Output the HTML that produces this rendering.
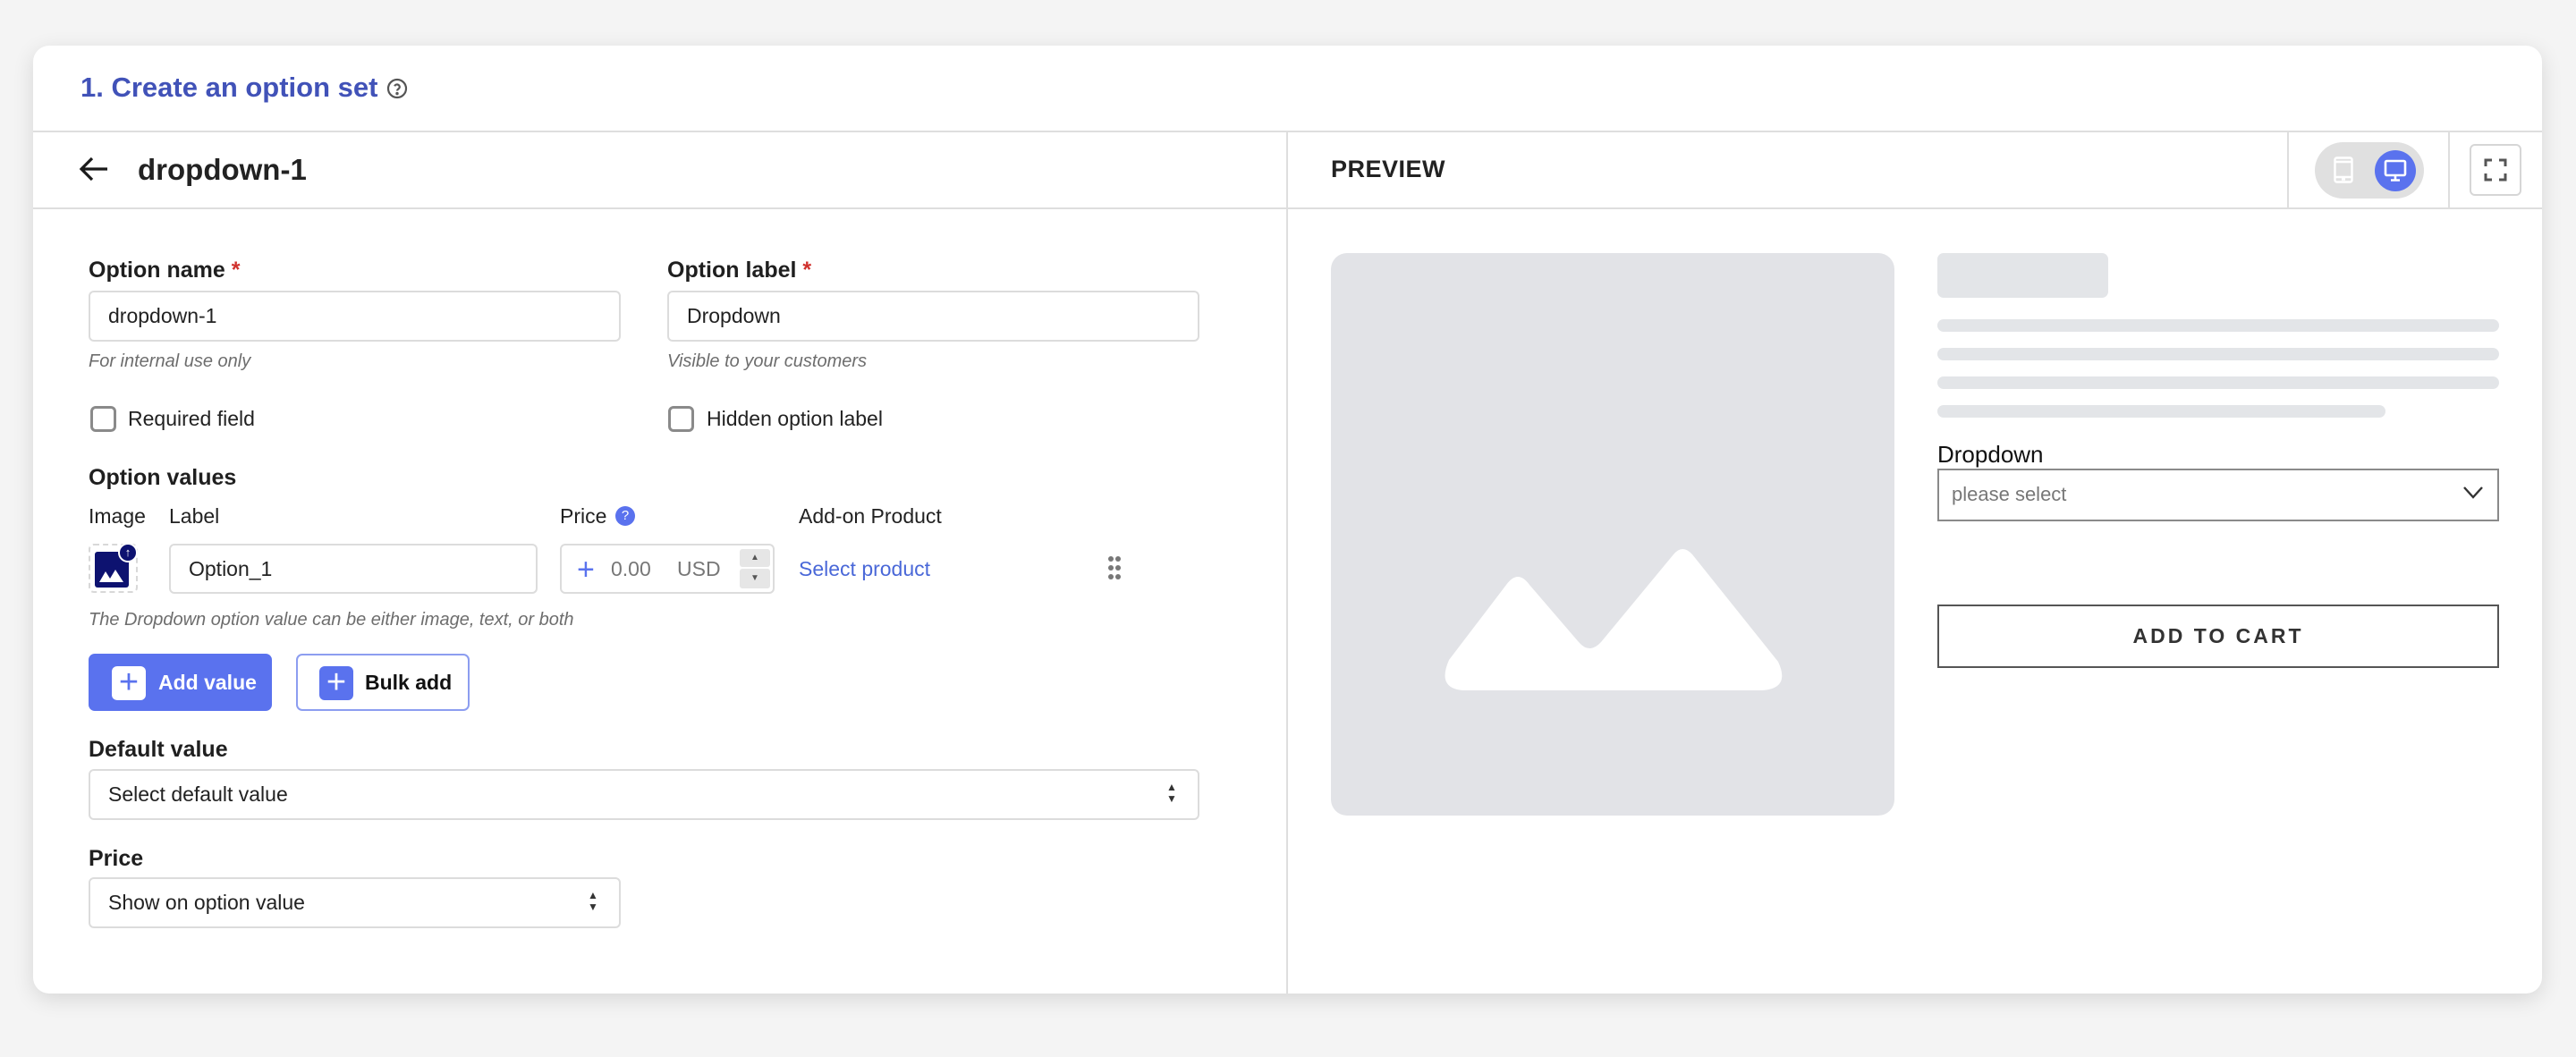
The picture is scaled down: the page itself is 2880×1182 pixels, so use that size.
<!DOCTYPE html>
<html><head><meta charset="utf-8"><style>
*{box-sizing:border-box;margin:0;padding:0}
body{width:2880px;height:1182px;background:#f4f4f4;font-family:"Liberation Sans",Arial,sans-serif;color:#1f1f1f;position:relative;overflow:hidden}
.a{position:absolute}
.card{left:37px;top:51px;width:2805px;height:1060px;background:#fff;border-radius:18px;box-shadow:0 6px 24px rgba(0,0,0,.12)}
.lbl{font-size:25px;font-weight:700;color:#1f1f1f}
.inp{border:2px solid #dcdcdc;border-radius:6px;background:#fff;font-size:23px;color:#222;padding-left:20px;display:flex;align-items:center}
.help{font-size:20px;font-style:italic;color:#6d6d6d}
.cb{width:29px;height:29px;border:3px solid #8a8a8a;border-radius:6px}
.t{font-size:23px;color:#222}
.sk{background:#e3e5e8;border-radius:7px}
</style></head><body>
<div class="a card"></div>
<div class="a" style="left:90px;top:80px;font-size:31px;font-weight:700;color:#4152b8">1. Create an option set</div>
<svg class="a" style="left:432px;top:87px" width="24" height="24" viewBox="0 0 24 24" fill="none" stroke="#555" stroke-width="2.2"><circle cx="12" cy="12" r="10"/><path d="M9.2 9.3a2.9 2.9 0 0 1 5.6 1c0 2-2.8 2.3-2.8 4.2"/><circle cx="12" cy="17.6" r=".6" fill="#555"/></svg>
<div class="a" style="left:37px;top:146px;width:2805px;height:2px;background:#dedede"></div>
<div class="a" style="left:37px;top:232px;width:2805px;height:2px;background:#dedede"></div>
<div class="a" style="left:1438px;top:146px;width:2px;height:965px;background:#dedede"></div>
<svg class="a" style="left:88px;top:175px" width="34" height="28" viewBox="0 0 34 28" fill="none" stroke="#1a1a1a" stroke-width="3.2"><path d="M32 14H3M15 2L3 14l12 12"/></svg>
<div class="a" style="left:154px;top:171px;font-size:33px;font-weight:600;color:#222">dropdown-1</div>
<div class="a" style="left:1488px;top:174px;font-size:27px;font-weight:600;color:#222;letter-spacing:.5px">PREVIEW</div>
<div class="a" style="left:2557px;top:147px;width:2px;height:86px;background:#dedede"></div>
<div class="a" style="left:2737px;top:147px;width:2px;height:86px;background:#dedede"></div>
<div class="a" style="left:2588px;top:159px;width:122px;height:63px;border-radius:32px;background:#e0e0e0"></div>
<svg class="a" style="left:2609px;top:175px" width="22" height="30" viewBox="0 0 22 30" fill="none" stroke="#fff" stroke-width="2.4"><rect x="1.5" y="1.5" width="19" height="27" rx="2"/><path d="M1.5 6h19M1.5 23h19M9 25.5h4"/></svg>
<div class="a" style="left:2655px;top:168px;width:46px;height:46px;border-radius:50%;background:#5a72ee"></div>
<svg class="a" style="left:2665px;top:178px" width="26" height="26" viewBox="0 0 26 26" fill="none" stroke="#fff" stroke-width="2.6"><rect x="2" y="2" width="22" height="16" rx="1.5"/><path d="M13 18v5M8 23.5h10"/></svg>
<div class="a" style="left:2761px;top:161px;width:58px;height:58px;border:2px solid #d6d6d6;border-radius:6px;background:#fff"></div>
<svg class="a" style="left:2777px;top:177px" width="26" height="26" viewBox="0 0 26 26" fill="none" stroke="#555" stroke-width="3"><path d="M2 9V2h7M17 2h7v7M24 17v7h-7M9 24H2v-7"/></svg>

<div class="a lbl" style="left:99px;top:288px">Option name <span style="color:#d0312d">*</span></div>
<div class="a inp" style="left:99px;top:325px;width:595px;height:57px">dropdown-1</div>
<div class="a help" style="left:99px;top:393px">For internal use only</div>
<div class="a lbl" style="left:746px;top:288px">Option label <span style="color:#d0312d">*</span></div>
<div class="a inp" style="left:746px;top:325px;width:595px;height:57px">Dropdown</div>
<div class="a help" style="left:746px;top:393px">Visible to your customers</div>
<div class="a cb" style="left:101px;top:454px"></div>
<div class="a t" style="left:143px;top:455px">Required field</div>
<div class="a cb" style="left:747px;top:454px"></div>
<div class="a t" style="left:790px;top:455px">Hidden option label</div>
<div class="a lbl" style="left:99px;top:520px">Option values</div>
<div class="a t" style="left:99px;top:564px">Image</div>
<div class="a t" style="left:189px;top:564px">Label</div>
<div class="a t" style="left:626px;top:564px">Price</div>
<div class="a" style="left:688px;top:566px;width:22px;height:22px;border-radius:50%;background:#5a72ee;color:#fff;font-size:15px;text-align:center;line-height:22px">?</div>
<div class="a t" style="left:893px;top:564px">Add-on Product</div>
<div class="a" style="left:99px;top:608px;width:55px;height:55px;border:2px dashed #d8d8d8;border-radius:6px"></div>
<div class="a" style="left:106px;top:617px;width:38px;height:40px;background:#0d1270;border-radius:3px"></div>
<svg class="a" style="left:110px;top:634px" width="30" height="18" viewBox="0 0 30 18" fill="#fff"><path d="M1 17l7-12 5 8 6-10 9 14z"/></svg>
<div class="a" style="left:132px;top:607px;width:22px;height:22px;border-radius:50%;background:#0d1270;border:2px solid #fff;color:#fff;font-size:13px;text-align:center;line-height:18px">↑</div>
<div class="a inp" style="left:189px;top:608px;width:412px;height:56px">Option_1</div>
<div class="a inp" style="left:626px;top:608px;width:240px;height:56px;padding-left:0"></div>
<div class="a" style="left:645px;top:618px;font-size:34px;color:#5a72ee">+</div>
<div class="a" style="left:683px;top:623px;font-size:23px;color:#777">0.00</div>
<div class="a" style="left:757px;top:623px;font-size:23px;color:#777">USD</div>
<div class="a" style="left:827px;top:614px;width:34px;height:20px;background:#e6e6e6;border-radius:3px;font-size:10px;text-align:center;line-height:20px;color:#555">▲</div>
<div class="a" style="left:827px;top:636px;width:34px;height:22px;background:#e6e6e6;border-radius:3px;font-size:10px;text-align:center;line-height:22px;color:#555">▼</div>
<div class="a" style="left:893px;top:623px;font-size:23px;color:#4a68d8">Select product</div>
<svg class="a" style="left:1238px;top:621px" width="16" height="28" viewBox="0 0 16 28" fill="#777"><circle cx="4" cy="4" r="3"/><circle cx="12" cy="4" r="3"/><circle cx="4" cy="14" r="3"/><circle cx="12" cy="14" r="3"/><circle cx="4" cy="24" r="3"/><circle cx="12" cy="24" r="3"/></svg>
<div class="a help" style="left:99px;top:682px">The Dropdown option value can be either image, text, or both</div>
<div class="a" style="left:99px;top:731px;width:205px;height:64px;background:#5a72ee;border-radius:7px"></div>
<div class="a" style="left:125px;top:745px;width:38px;height:38px;background:#fff;border-radius:6px;color:#5a72ee;font-size:38px;text-align:center;line-height:36px">+</div>
<div class="a" style="left:177px;top:750px;font-size:23px;font-weight:700;color:#fff">Add value</div>
<div class="a" style="left:331px;top:731px;width:194px;height:64px;border:2px solid #8c9df0;border-radius:7px"></div>
<div class="a" style="left:357px;top:745px;width:38px;height:38px;background:#5a72ee;border-radius:6px;color:#fff;font-size:38px;text-align:center;line-height:36px">+</div>
<div class="a" style="left:408px;top:750px;font-size:23px;font-weight:700;color:#111">Bulk add</div>
<div class="a lbl" style="left:99px;top:824px">Default value</div>
<div class="a inp" style="left:99px;top:860px;width:1242px;height:57px">Select default value</div>
<div class="a" style="left:1304px;top:874px;font-size:12px;line-height:13px;color:#333">▲<br>▼</div>
<div class="a lbl" style="left:99px;top:946px">Price</div>
<div class="a inp" style="left:99px;top:981px;width:595px;height:57px">Show on option value</div>
<div class="a" style="left:657px;top:995px;font-size:12px;line-height:13px;color:#333">▲<br>▼</div>

<div class="a" style="left:1488px;top:283px;width:630px;height:629px;background:#e2e3e7;border-radius:18px"></div>
<svg class="a" style="left:1600px;top:600px" width="400" height="175" viewBox="0 0 400 175" fill="#fff"><path d="M20 138 L84 54 Q97 36 110 54 L165 118 Q177 132 190 118 L271 20 Q281 8 292 20 L388 140 Q402 170 370 172 L36 172 Q6 170 20 138Z"/></svg>
<div class="a sk" style="left:2166px;top:283px;width:191px;height:50px"></div>
<div class="a sk" style="left:2166px;top:357px;width:628px;height:14px"></div>
<div class="a sk" style="left:2166px;top:389px;width:628px;height:14px"></div>
<div class="a sk" style="left:2166px;top:421px;width:628px;height:14px"></div>
<div class="a sk" style="left:2166px;top:453px;width:501px;height:14px"></div>
<div class="a" style="left:2166px;top:493px;font-size:26px;color:#111">Dropdown</div>
<div class="a" style="left:2166px;top:524px;width:628px;height:59px;border:2px solid #8a8a8a"></div>
<div class="a" style="left:2182px;top:540px;font-size:22px;color:#777">please select</div>
<svg class="a" style="left:2754px;top:544px" width="22" height="14" viewBox="0 0 22 14" fill="none" stroke="#333" stroke-width="2.4"><path d="M1 1l10 11L21 1"/></svg>
<div class="a" style="left:2166px;top:676px;width:628px;height:71px;border:2px solid #555;font-size:23px;font-weight:700;letter-spacing:3px;text-align:center;line-height:67px;color:#333">ADD TO CART</div>
</body></html>
